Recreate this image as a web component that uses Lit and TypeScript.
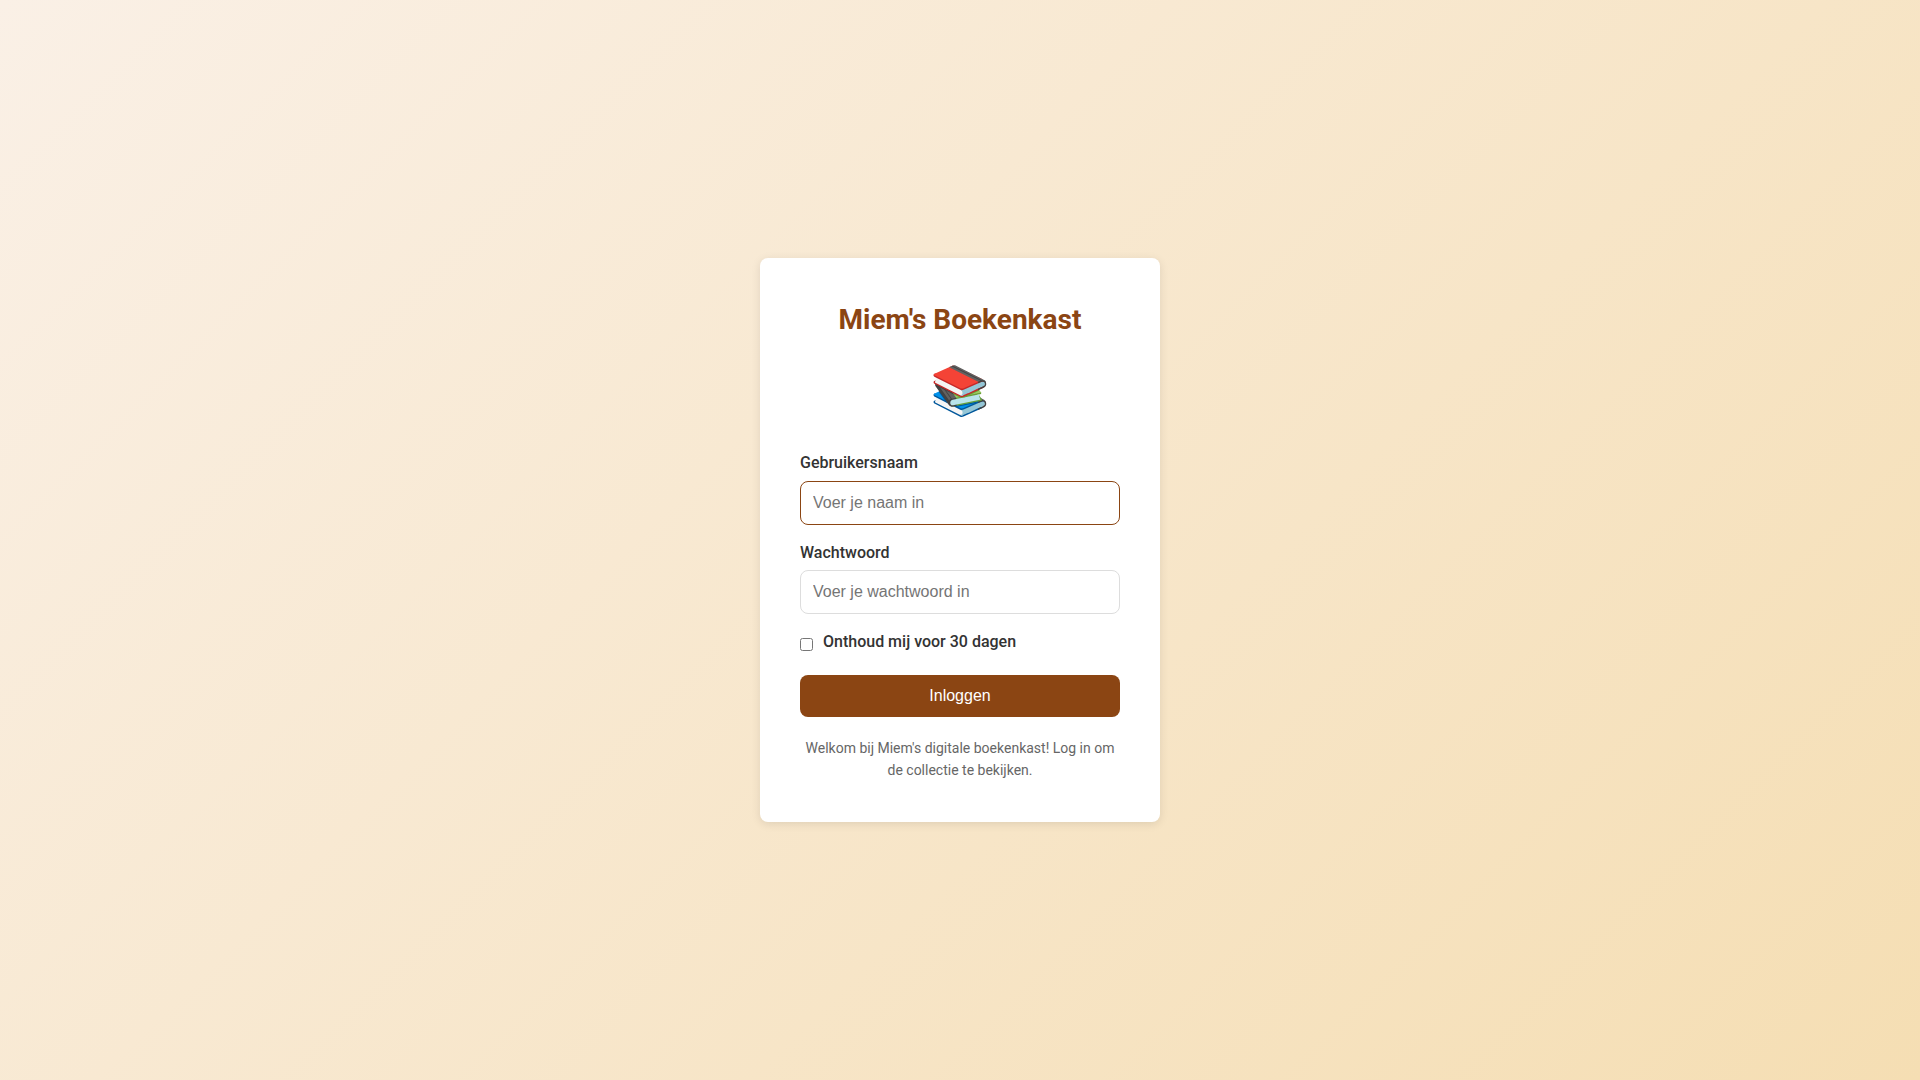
import { LitElement, html, css } from "lit";
import { customElement } from "lit/decorators.js";

@customElement("app-root")
export class AppRoot extends LitElement {
  static styles = css`
    :host {
      display: flex;
      align-items: center;
      justify-content: center;
      min-height: 100vh;
      font-family: Roboto, sans-serif;
      line-height: 1.6;
      color: #333;
      background: linear-gradient(135deg, #faf0e6 0%, #f5deb3 100%);
    }
    * {
      box-sizing: border-box;
    }
    .card {
      width: 100%;
      max-width: 400px;
      padding: 40px;
      background: #fff;
      border-radius: 8px;
      box-shadow: 0 2px 10px rgba(0, 0, 0, 0.1);
    }
    .title {
      margin: 0 0 10px;
      font-size: 28px;
      font-weight: 700;
      text-align: center;
      color: #8b4513;
    }
    .emblem {
      margin-bottom: 20px;
      font-size: 48px;
      text-align: center;
    }
    .field {
      margin-bottom: 15px;
    }
    .label {
      display: block;
      margin-bottom: 5px;
      font-weight: 500;
    }
    .input {
      display: block;
      width: 100%;
      padding: 12px;
      border: 1px solid #ddd;
      border-radius: 8px;
      font-family: "Liberation Sans", Arial, sans-serif;
      font-size: 16px;
      outline: none;
    }
    .input:focus {
      border-color: #8b4513;
    }
    .remember {
      display: flex;
      align-items: center;
      gap: 10px;
      margin-bottom: 15px;
    }
    .check {
      margin: 0;
    }
    .submit {
      display: block;
      width: 100%;
      padding: 12px;
      border: 0;
      border-radius: 8px;
      background: #8b4513;
      color: #fff;
      font-family: "Liberation Sans", Arial, sans-serif;
      font-size: 16px;
      cursor: pointer;
    }
    .welcome {
      margin: 20px 0 0;
      font-size: 14px;
      text-align: center;
      color: #666;
    }
  `;

  firstUpdated() {
    this.renderRoot.querySelector<HTMLInputElement>("#username")?.focus();
  }

  private onSubmit(event: Event) {
    event.preventDefault();
  }

  render() {
    return html`
      <main class="card">
        <h1 class="title">Miem's Boekenkast</h1>
        <div class="emblem">📚</div>
        <form @submit=${this.onSubmit}>
          <div class="field">
            <label class="label" for="username">Gebruikersnaam</label>
            <input class="input" id="username" type="text" placeholder="Voer je naam in" />
          </div>
          <div class="field">
            <label class="label" for="password">Wachtwoord</label>
            <input class="input" id="password" type="password" placeholder="Voer je wachtwoord in" />
          </div>
          <div class="remember">
            <input class="check" id="remember" type="checkbox" />
            <label class="label" for="remember">Onthoud mij voor 30 dagen</label>
          </div>
          <button class="submit" type="submit">Inloggen</button>
        </form>
        <p class="welcome">Welkom bij Miem's digitale boekenkast! Log in om de collectie te bekijken.</p>
      </main>
    `;
  }
}
